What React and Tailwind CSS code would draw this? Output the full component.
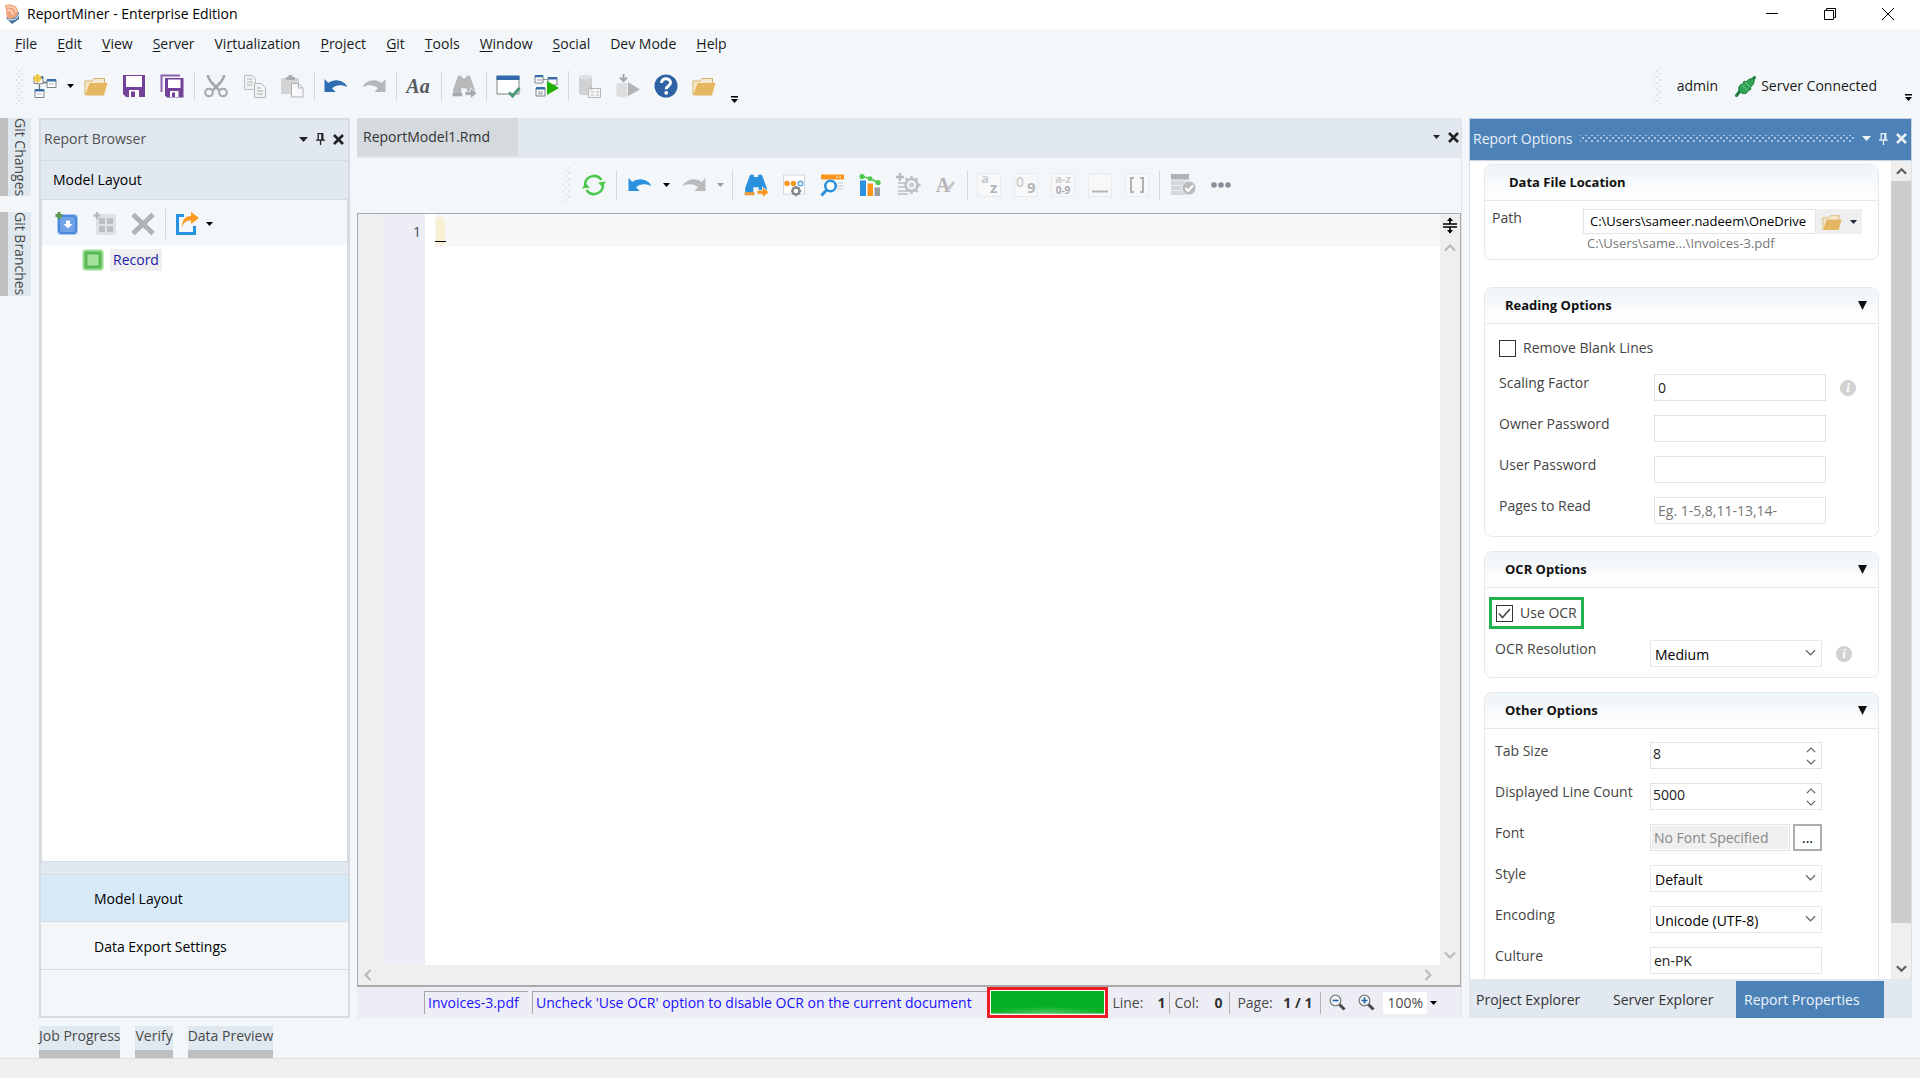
import React, { useState } from 'react';

const menus = [
	['', 'F', 'ile'],
	['', 'E', 'dit'],
	['', 'V', 'iew'],
	['', 'S', 'erver'],
	['Vi', 'r', 'tualization'],
	['', 'P', 'roject'],
	['', 'G', 'it'],
	['', 'T', 'ools'],
	['', 'W', 'indow'],
	['', 'S', 'ocial'],
	['Dev Mode', '', ''],
	['', 'H', 'elp'],
];

function Icon({ size = 24, children, className = '' }) {
	return (
		<svg width={size} height={size} viewBox="0 0 24 24" fill="none" className={`shrink-0 overflow-visible ${className}`} aria-hidden="true">
			{children}
		</svg>
	);
}

function Caret({ className = 'text-black' }) {
	return (
		<svg width="7" height="4" viewBox="0 0 7 4" className={`shrink-0 ${className}`} aria-hidden="true">
			<path d="M0 0h7L3.5 4z" fill="currentColor" />
		</svg>
	);
}

function Overflow() {
	return (
		<svg width="7" height="7" viewBox="0 0 7 7" aria-hidden="true">
			<path d="M0 0h7v1.5H0zM0 3h7L3.5 7z" fill="#000" />
		</svg>
	);
}

function Chevron({ dir = 'down', size = 12, color = '#606060', width = 1.3 }) {
	const paths = {
		down: 'M1 3.5 6 8.5l5-5',
		up: 'M1 8.5 6 3.5l5 5',
		left: 'M8.5 1 3.5 6l5 5',
		right: 'M3.5 1l5 5-5 5',
	};
	return (
		<svg width={size} height={size} viewBox="0 0 12 12" fill="none" className="shrink-0" aria-hidden="true">
			<path d={paths[dir]} stroke={color} strokeWidth={width} />
		</svg>
	);
}

function Pin() {
	return (
		<svg width="9" height="12" viewBox="0 0 9 12" fill="none" aria-hidden="true">
			<path d="M2.2 7V.7h4.6V7M0 7.2h9M4.5 7v5" stroke="currentColor" strokeWidth="1.3" />
			<path d="M5.2 1h1.6v6H5.2z" fill="currentColor" />
		</svg>
	);
}

function Close() {
	return (
		<svg width="11" height="11" viewBox="0 0 11 11" fill="none" aria-hidden="true">
			<path d="m1 1 9 9m0-9-9 9" stroke="currentColor" strokeWidth="2.6" />
		</svg>
	);
}

function Tool({ label, narrow, children }) {
	return (
		<button type="button" aria-label={label} className={`flex h-9 shrink-0 items-center justify-center ${narrow ? 'w-[37px]' : 'w-[38px]'}`}>
			{children}
		</button>
	);
}

function DropButton({ label, className, wide }) {
	return (
		<button type="button" aria-label={label} className={`flex h-9 shrink-0 items-center justify-center ${wide ? 'w-4' : 'w-[13px]'}`}>
			<Caret className={className} />
		</button>
	);
}

function Sep({ wide }) {
	return (
		<div className={`flex shrink-0 justify-center ${wide ? 'w-2' : 'w-[6px]'}`}>
			<div className="h-[30px] w-px bg-[#d3d8dc]" />
		</div>
	);
}

function Grip() {
	return (
		<div className="h-9 w-[7px] shrink-0 bg-[radial-gradient(#e0e5e9_1px,transparent_1px),radial-gradient(#e0e5e9_1px,transparent_1px)] bg-[size:6px_6px] bg-[position:0_0,3px_3px]" />
	);
}

function FolderIcon({ size = 24 }) {
	return (
		<Icon size={size}>
			<path d="M1 21V7h7l2-2.5h10.500V9" fill="#f6ead2" stroke="#d9b062" />
			<path d="M1.200 21.500 5.500 9h18L20 21.500z" fill="#e6b763" />
		</Icon>
	);
}

function UndoIcon({ color, flip }) {
	return (
		<Icon className={flip ? '-scale-x-100' : ''}>
			<path d="M.5 5v13h11.200L8 14.300c4-3.500 9-4.300 15.500-1.300C20.500 6.500 11 3.500 4.300 9z" fill={color} />
		</Icon>
	);
}

function Binoculars({ color, arrow, base }) {
	return (
		<Icon size={26}>
			<path d="M6.500 2.500h3.500v2h4v-2h3.500l1 3 3.500 9.500v5h-7.500v-6h-5v6H2v-5L5.500 5.500z" fill={color} />
			<path d="M1.500 18.500h9v3h-9z" fill={base} />
			<path d="M13 17h5v-3.200l6 4.900-6 4.900V20.500h-5z" fill={arrow} stroke="#f3f7fa" strokeWidth=".7" />
		</Icon>
	);
}

function TextBox({ children }) {
	return (
		<Icon>
			<path d="M.5.5h23v23H.5z" fill="#f7f8f9" stroke="#e9ebed" />
			{children}
		</Icon>
	);
}

function MainToolbar() {
	return (
		<div className="flex h-[54px] items-center pr-2 pl-4">
			<Grip />
			<div className="ml-[3px] flex items-center">
				<Tool label="New">
					<Icon>
						<path d="M1 2.500h9v7H1zM14 5.500h9v8h-9zM2 15.500h9v8H2z" fill="#fff" stroke="#7a828a" />
						<path d="M5 3h5v2H5zM14 5h9v2.500h-9zM2 15h9v2.500H2z" fill="#3a6ea8" />
						<path d="M10 8.500h4M6.500 10v5" stroke="#6b7279" strokeWidth="1.300" />
						<path d="M4 10h5M16 10h5M4 20h5" stroke="#b5bbc0" />
						<circle cx="4.500" cy="4.500" r="3.700" fill="#f4d35c" />
						<path d="M4.500 0v9M0 4.500h9" stroke="#e8bc2a" />
					</Icon>
				</Tool>
				<DropButton label="New options" />
				<Tool label="Open"><FolderIcon /></Tool>
				<Tool label="Save">
					<Icon>
						<path d="M1 1h22v22H4l-3-3z" fill="#754299" />
						<path d="M4 2h16v11H4z" fill="#fff" />
						<path d="M7 16h10v7H7z" fill="#fff" />
						<path d="M9 17.500h4V23H9z" fill="#754299" />
					</Icon>
				</Tool>
				<Tool label="Save all">
					<Icon>
						<path d="M1.500 18V1.500H20" stroke="#8a62ab" strokeWidth="2" />
						<path d="M5 4h18.500v19.500H7l-2-2z" fill="#754299" />
						<path d="M8 5.500h12.500V14H8z" fill="#fff" />
						<path d="M10 17h8.500v6H10z" fill="#fff" />
						<path d="M12 18.500h3V23h-3z" fill="#754299" />
					</Icon>
				</Tool>
				<Sep />
				<Tool label="Cut">
					<Icon>
						<path d="M4 1c0 3 1.500 5 4 8l7 7M20 1c0 3-1.500 5-4 8l-7 7" stroke="#a5a8aa" strokeWidth="2.600" />
						<circle cx="5" cy="18.500" r="3.800" stroke="#a5a8aa" strokeWidth="2" />
						<circle cx="19" cy="18.500" r="3.800" stroke="#a5a8aa" strokeWidth="2" />
					</Icon>
				</Tool>
				<Tool label="Copy">
					<Icon>
						<path d="M2.500 1.500h8l3 3v11h-11z" fill="#f1f2f3" stroke="#bfc2c4" />
						<path d="M5 5h5M5 8h6M5 11h5" stroke="#c4c7c9" strokeWidth="1.300" />
						<path d="M12.500 9.500h7l4 4v10h-11z" fill="#f3f4f5" stroke="#b3b6b9" />
						<path d="M15 14h4M15 17h6M15 20h6" stroke="#bfc2c4" strokeWidth="1.300" />
					</Icon>
				</Tool>
				<Tool label="Paste">
					<Icon>
						<path d="M1 4h18v16H1z" fill="#d2d4d6" />
						<path d="M6 6V3h2.500V1h4v2H15v3z" fill="#a9acaf" />
						<path d="M11.500 9.500h7l4.500 4.500v9h-11.500z" fill="#f7f8f9" stroke="#b0b3b6" />
						<path d="M18.500 9.500V14H23" stroke="#b0b3b6" />
					</Icon>
				</Tool>
				<Sep />
				<Tool label="Undo"><UndoIcon color="#2f6db3" /></Tool>
				<Tool label="Redo"><UndoIcon color="#b4b7b9" flip /></Tool>
				<Sep />
				<Tool label="Font">
					<span className="font-['Liberation_Serif',serif] text-xl leading-6 font-bold text-[#56595b] italic">Aa</span>
				</Tool>
				<Sep wide />
				<Tool label="Find"><Binoculars color="#b6b8ba" arrow="#a6a8aa" base="#a6a8aa" /></Tool>
				<Sep />
				<Tool label="Verify">
					<Icon>
						<path d="M1 2.500h22V20H1z" fill="#fff" stroke="#80868b" />
						<path d="M.5 1.500h23v4.500H.5z" fill="#3368ab" />
						<path d="m13 18.500 3.500 3.500 7-8" stroke="#4b9a77" strokeWidth="3" />
					</Icon>
				</Tool>
				<Tool label="Run">
					<Icon>
						<path d="M1 1.500h8V9H1zM14 3.500h9V11h-9zM2 14h9v8H2z" fill="#fff" stroke="#7a828a" />
						<path d="M1 1h8v2.300H1zM14 3h9v2.500h-9zM2 13h9v2.500H2z" fill="#3a6ea8" />
						<path d="M3 6h5M4 18h5M4 20h5M9 5.500h5" stroke="#8d9499" />
						<path d="m13 7 12 7-12 7z" fill="#1fb200" />
					</Icon>
				</Tool>
				<Sep />
				<Tool label="Deploy job">
					<Icon>
						<path d="M1 3v16c0 3 13 3 13 0V3z" fill="#cfd1d3" />
						<ellipse cx="7.500" cy="3" rx="6.500" ry="2.500" fill="#dfe1e2" />
						<path d="M10.500 14.500h12v9h-12z" fill="#f3f4f5" stroke="#b5b8ba" />
						<path d="M13 18h3M18 18h3M13 21h3M18 21h3M13 12v4" stroke="#b5b8ba" />
					</Icon>
				</Tool>
				<Tool label="Run job">
					<Icon>
						<path d="M.5 9v12c0 3 11 3 11 0V9z" fill="#dcdee0" />
						<path d="M7.500 0v7M4 3.500 7.500 7 11 3.500" stroke="#a3a6a9" strokeWidth="2" />
						<path d="m12 8 12 7.500L12 22z" fill="#b2b4b6" />
					</Icon>
				</Tool>
				<Tool label="Help">
					<Icon>
						<circle cx="12" cy="12" r="11.500" fill="#2f62a2" />
						<path d="M7.500 9c.2-6 9.300-5.500 9 0-.2 3-4.300 3-4.300 6.200" stroke="#fff" strokeWidth="3" />
						<circle cx="12.200" cy="18.800" r="1.900" fill="#fff" />
					</Icon>
				</Tool>
				<Tool label="Browse"><FolderIcon /></Tool>
			</div>
			<button type="button" aria-label="More commands" className="ml-2 self-end pb-[10px]"><Overflow /></button>
			<div className="ml-auto flex items-center">
				<Grip />
				<span className="ml-4">admin</span>
				<svg width="21" height="21" viewBox="0 0 21 21" className="mr-[5px] ml-[17px]" aria-hidden="true">
					<path d="m1.500 19.500 4-5M19.500 1.500l-4 4" stroke="#1f7f3c" strokeWidth="3" strokeLinecap="round" />
					<path d="M4 15c-1-4 1-7 4-7l1-3 2 1c2-3 6-4 8-3 1 3-1 7-4 8l1 2-3 2c-1 3-5 4-9 0z" fill="#2fa457" stroke="#1d7a39" />
					<path d="m7 9 6 6M10 6l5 5" stroke="#74cf8f" />
				</svg>
				<span>Server Connected</span>
			</div>
			<button type="button" aria-label="More status" className="ml-7 self-end pb-3"><Overflow /></button>
		</div>
	);
}

function SideTabs() {
	return (
		<div className="mr-2 flex w-[31px] shrink-0 flex-col gap-4">
			{['Git Changes', 'Git Branches'].map(tab => (
				<button
					key={tab}
					type="button"
					className="border-l-8 border-[#bfbfbf] bg-[#e0e8f0] pr-px pl-[2px] text-left text-[#4a4a4a] [writing-mode:vertical-rl]"
				>
					{tab}
				</button>
			))}
		</div>
	);
}

function PanelButtons() {
	return (
		<div className="flex shrink-0 items-center gap-2">
			<button type="button" aria-label="Panel menu">
				<svg width="9" height="5" viewBox="0 0 9 5" aria-hidden="true"><path d="M0 0h9L4.500 5z" fill="currentColor" /></svg>
			</button>
			<button type="button" aria-label="Pin panel"><Pin /></button>
			<button type="button" aria-label="Close panel"><Close /></button>
		</div>
	);
}

function ReportBrowser() {
	return (
		<section className="flex w-[311px] shrink-0 flex-col border-2 border-[#d5dbe1] bg-[#f3f7fa]">
			<div className="flex h-10 shrink-0 items-center justify-between bg-[#e1e8f0] pr-1 pb-[2px] pl-[3px] text-[#222]">
				<h2 className="text-[#505050]">Report Browser</h2>
				<PanelButtons />
			</div>
			<div className="flex h-10 shrink-0 items-center border-y border-[#d5dbe1] bg-[#e1e8f0] pl-3 text-black">Model Layout</div>
			<div className="flex h-[45px] shrink-0 items-center border-x border-[#d5dbe1] pt-[2px] pl-[6px]">
				<Tool label="Add record">
					<Icon>
						<rect x="2" y="2" width="21" height="21" rx="4" fill="#a9c8f2" />
						<rect x="4" y="4" width="17" height="17" rx="3" fill="#6fa2e6" stroke="#4b87dc" strokeWidth="2" />
						<path d="M11 8.500h4v3.500h2.500l-4.500 4.500L8.500 12H11z" fill="#fff" />
						<path d="M4 0v7M.5 3.500h7" stroke="#5a9a52" strokeWidth="3" />
					</Icon>
				</Tool>
				<Tool label="Add field">
					<Icon>
						<rect x="3" y="2" width="20" height="21" rx="3" fill="#dfe1e3" />
						<path d="M6 6h6v6H6zM14 6h6v6h-6zM6 14h6v6H6zM14 14h6v6h-6z" fill="#bdc0c2" />
						<path d="M4 0v7M.5 3.500h7" stroke="#b9bcbe" strokeWidth="2.500" />
					</Icon>
				</Tool>
				<Tool label="Delete">
					<Icon><path d="m2 2.500 20 19m0-19-20 19" stroke="#b0b2b4" strokeWidth="5" /></Icon>
				</Tool>
				<Sep />
				<Tool label="Export">
					<Icon>
						<path d="M9 3.500H2.500v18h17V14" stroke="#2a93e0" strokeWidth="3" />
						<path d="M7 15C7 8 10 4 16 4V0l8 6-8 6V8.500c-5 0-7 2-9 6.500z" fill="#fb9a1d" />
					</Icon>
				</Tool>
				<button type="button" aria-label="Export options"><Caret /></button>
			</div>
			<div className="min-h-0 flex-1 border border-t-0 border-[#d5dbe1] bg-white pt-1 pl-10">
				<div className="flex items-center gap-[6px]">
					<svg width="22" height="22" viewBox="0 0 22 22" aria-hidden="true">
						<rect x=".5" y=".5" width="21" height="21" rx="3" fill="#96dc90" />
						<rect x="2.500" y="2.500" width="17" height="17" rx="2" fill="#5cb856" />
						<rect x="5.500" y="5.500" width="11" height="11" fill="#a3e39e" />
					</svg>
					<span className="bg-[#efefef] px-[3px] leading-[22px] text-[#1c1ca8]">Record</span>
				</div>
			</div>
			<div className="h-3 shrink-0 bg-[#e1e8f0]" />
			<button type="button" className="h-12 shrink-0 border-y border-[#d5dbe1] bg-[#d8e9f8] pt-[2px] pl-[53px] text-left text-black">Model Layout</button>
			<button type="button" className="h-12 shrink-0 border-b border-[#d5dbe1] pt-[2px] pl-[53px] text-left text-black">Data Export Settings</button>
			<div className="h-[46px] shrink-0" />
		</section>
	);
}

function EditorToolbar() {
	return (
		<div className="flex h-[55px] shrink-0 items-center justify-center bg-[#f3f7fa] pr-4 pb-[2px]">
			<Grip />
			<div className="ml-[5px] flex items-center">
				<Tool label="Refresh">
					<Icon>
						<path d="M3 12a9 9 0 0 1 16.500-5M21 12A9 9 0 0 1 4.500 17" stroke="#4cc94a" strokeWidth="2.500" />
						<path d="M24 8.500 20.500 14 16 9.500zM0 15.500 3.500 10 8 14.500z" fill="#4cc94a" />
					</Icon>
				</Tool>
				<Sep wide />
				<Tool label="Undo edit"><UndoIcon color="#2a91de" /></Tool>
				<DropButton label="Undo list" wide />
				<Tool label="Redo edit"><UndoIcon color="#b9bbbd" flip /></Tool>
				<DropButton label="Redo list" className="text-[#9a9c9e]" wide />
				<Sep wide />
				<Tool label="Find text"><Binoculars color="#2a91de" arrow="#fb961c" base="#e8993a" /></Tool>
				<Tool label="Pattern settings">
					<Icon>
						<path d="M1.500 2h21v19h-21z" fill="#fff" stroke="#d5d7d9" />
						<circle cx="5" cy="10.500" r="2.700" fill="#fb961c" />
						<circle cx="11.500" cy="10.500" r="2.700" fill="#fb961c" />
						<circle cx="18.500" cy="10.500" r="2.300" stroke="#5aa8e4" strokeWidth="1.500" />
						<circle cx="14" cy="18" r="3.500" stroke="#85888a" strokeWidth="2.500" fill="#fff" />
						<path d="M14 13v2M14 21v2.500M9 18h2M17.500 18h2M10.500 14.500 12 16M17.500 14.500 16 16M10.500 21.500 12 20M17.500 21.500 16 20" stroke="#85888a" strokeWidth="1.500" />
					</Icon>
				</Tool>
				<Tool label="Search pattern">
					<Icon>
						<path d="M1 1.500h23v5H1z" fill="#fb961c" />
						<path d="M16 4h2M19 4h2" stroke="#ffd6a0" strokeWidth="1.300" />
						<path d="M17 10h6M17 13h6M17 16h6" stroke="#d9dbdd" strokeWidth="1.500" />
						<circle cx="10.500" cy="13" r="5.200" stroke="#2a91de" strokeWidth="2.600" fill="#fff" />
						<path d="m6.500 17-5 5.500" stroke="#2a91de" strokeWidth="3" />
					</Icon>
				</Tool>
				<Tool label="Statistics">
					<Icon>
						<path d="M2 7.500h6V23H2z" fill="#2a91de" />
						<path d="M9.500 10.500h5.500V23H9.500z" fill="#fb961c" />
						<path d="M16.500 14.500H22V23h-5.500z" fill="#9a9c9e" />
						<path d="m4 3.500 8 2 8 4" stroke="#4cc94a" strokeWidth="1.500" />
						<circle cx="4" cy="3.500" r="2.600" fill="#4cc94a" />
						<circle cx="12" cy="5.700" r="2.400" fill="#4cc94a" />
						<circle cx="20" cy="9.500" r="2.600" fill="#4cc94a" />
					</Icon>
				</Tool>
				<Tool label="Auto settings">
					<Icon>
						<path d="M2 10h10M2 14h10M2 18h10M2 21h10" stroke="#c9cbcd" strokeWidth="2" />
						<path d="M4 0v8M0 4h8" stroke="#b9bbbd" strokeWidth="2.500" />
						<circle cx="15.500" cy="12" r="6" stroke="#bdbfc1" strokeWidth="2.600" fill="#f3f7fa" />
						<circle cx="15.500" cy="12" r="2.500" fill="#c9cbcd" />
						<path d="M15.500 3v3M15.500 18v3M21.500 12h3M20 6.500 21.500 5M20 17.500l1.500 1.500M11 6.500 9.500 5" stroke="#bdbfc1" strokeWidth="2.400" />
					</Icon>
				</Tool>
				<Tool label="Style pen">
					<span className="font-['Liberation_Serif',serif] text-xl leading-6 font-bold text-[#b3b5b7]">A</span>
					<svg width="9" height="14" viewBox="0 0 9 14" className="-ml-1" aria-hidden="true"><path d="m1 13 .5-3.500L7 3l2 2-5.500 7z" fill="#c5c7c9" /></svg>
				</Tool>
				<Sep />
				<Tool label="Match letters" narrow>
					<TextBox>
						<text x="4" y="10" fontSize="13" fontWeight="700" fill="#cacccd">a</text>
						<text x="13" y="20" fontSize="15" fontWeight="700" fill="#b4b6b8">z</text>
					</TextBox>
				</Tool>
				<Tool label="Match digits" narrow>
					<TextBox>
						<text x="2" y="14" fontSize="14" fontWeight="600" fill="#cacccd">0</text>
						<text x="13" y="20" fontSize="15" fontWeight="700" fill="#b4b6b8">9</text>
					</TextBox>
				</Tool>
				<Tool label="Match letters or digits" narrow>
					<TextBox>
						<text x="12" y="10" fontSize="11" textAnchor="middle" fontWeight="700" fill="#cacccd">a-z</text>
						<text x="12" y="21" fontSize="10" textAnchor="middle" fontWeight="700" fill="#a9abad">0-9</text>
					</TextBox>
				</Tool>
				<Tool label="Match blank" narrow>
					<TextBox><path d="M4 18.500h16" stroke="#b4b6b8" strokeWidth="2" /></TextBox>
				</Tool>
				<Tool label="Match brackets" narrow>
					<TextBox><path d="M9 5H6v14h3M15 5h3v14h-3" stroke="#b0b2b4" strokeWidth="2" /></TextBox>
				</Tool>
				<Sep wide />
				<Tool label="Apply">
					<Icon>
						<path d="M0 1h18v5.500H0z" fill="#b0b2b4" />
						<path d="M0 7.500h20v4.500H0zM0 12.800h20v4.500H0zM0 18h20v4H0z" fill="#d5d7d9" />
						<circle cx="18" cy="15" r="7" fill="#b9bbbd" stroke="#f3f7fa" />
						<path d="m14.500 15 2.500 3 5-5.500" stroke="#fff" strokeWidth="2" />
					</Icon>
				</Tool>
				<Tool label="More">
					<svg width="20" height="6" viewBox="0 0 20 6" fill="#8a8f9a" aria-hidden="true">
						<circle cx="3" cy="3" r="2.800" /><circle cx="10" cy="3" r="2.800" /><circle cx="17" cy="3" r="2.800" />
					</svg>
				</Tool>
			</div>
		</div>
	);
}

function ZoomIcon({ plus }) {
	return (
		<svg width="17" height="17" viewBox="0 0 17 17" fill="none" aria-hidden="true">
			<path d="m9.500 9.500 6 6" stroke="#4a4a4a" strokeWidth="3" />
			<circle cx="6.500" cy="6.500" r="5.300" fill="#f6f9fc" stroke="#7c7c7c" strokeWidth="1.300" />
			<path d={plus ? 'M3.500 6.500h6M6.500 3.500v6' : 'M3.500 6.500h6'} stroke="#1f62a8" strokeWidth="1.700" />
		</svg>
	);
}

function StatusBar() {
	return (
		<div className="flex h-[31px] shrink-0 items-stretch bg-[#edeef5] pl-[67px] text-[#4a4a4a]">
			<a href="#file" className="my-1 w-[104px] shrink-0 border-t border-l border-[#a5a5a5] pl-[3px] leading-[22px] whitespace-nowrap text-[#1a10ff]">Invoices-3.pdf</a>
			<a href="#ocr" className="my-1 ml-1 min-w-0 flex-1 overflow-hidden border-t border-l border-[#a5a5a5] pl-[3px] leading-[22px] whitespace-nowrap text-[#1a10ff]">
				Uncheck &#39;Use OCR&#39; option to disable OCR on the current document
			</a>
			<div className="w-[121px] shrink-0 border-[3px] border-[#ee1c24] bg-white p-px">
				<div role="progressbar" aria-label="OCR progress" className="h-full border-b border-[#7fc98b] bg-[#06b025] bg-[radial-gradient(ellipse_at_bottom,#4cc95f_0%,#06b025_75%)] bg-[size:100%_6px] bg-bottom bg-no-repeat" />
			</div>
			<div className="flex shrink-0 items-center">
				<span className="ml-1 flex w-[53px] justify-between">Line: <b className="text-[#333]">1</b></span>
				<span className="mx-1 h-[22px] w-px bg-[#b5b5b5]" />
				<span className="flex w-12 justify-between">Col: <b className="text-[#333]">0</b></span>
				<span className="mx-[7px] h-[22px] w-px bg-[#b5b5b5]" />
				<span className="flex w-[75px] justify-between">Page: <b className="text-[#333]">1 / 1</b></span>
				<span className="mx-2 h-[22px] w-px bg-[#b5b5b5]" />
				<button type="button" aria-label="Zoom out"><ZoomIcon /></button>
				<button type="button" aria-label="Zoom in" className="ml-3"><ZoomIcon plus /></button>
				<button type="button" className="ml-2 flex items-center gap-[3px]">
					<span className="bg-white px-1 leading-[22px]">100%</span>
					<Caret />
				</button>
			</div>
			<div className="w-6 shrink-0" />
		</div>
	);
}

function Editor() {
	return (
		<section className="mr-[7px] ml-[7px] flex min-w-0 flex-1 flex-col border-r border-[#dfe3e8] bg-[#e1e8f0]">
			<div className="flex h-10 shrink-0 items-start justify-between">
				<button type="button" className="h-[38px] w-[161px] bg-[#d5dade] pl-[6px] text-left text-[#333]">ReportModel1.Rmd</button>
				<div className="flex h-[38px] items-center gap-2 pr-[2px] text-[#222]">
					<button type="button" aria-label="Document list"><Caret className="text-[#222]" /></button>
					<button type="button" aria-label="Close document"><Close /></button>
				</div>
			</div>
			<EditorToolbar />
			<div className="flex min-h-0 flex-1 flex-col border border-b-2 border-[#ababab] bg-[#efefef]">
				<div className="flex min-h-0 flex-1">
					<div className="w-6 shrink-0" />
					<div className="w-[43px] shrink-0 bg-[#edeef5] pt-[6px] pr-1 text-right leading-6 text-[#3f5064]">1</div>
					<div className="min-w-0 flex-1 bg-white pl-[10px]">
						<div className="h-[33px] bg-[#f7f7f7] pt-[3px]">
							<div className="ml-px h-6 w-[9px] rounded-t-lg bg-[#faf0d2]" />
							<div className="h-px w-[11px] bg-black" />
							<div className="ml-px h-[3px] w-[9px] rounded-b-lg bg-[#faf0d2]" />
						</div>
					</div>
					<div className="flex w-5 shrink-0 flex-col items-center pt-[3px] pb-1">
						<svg width="14" height="17" viewBox="0 0 14 17" fill="none" aria-hidden="true">
							<path d="M0 7h14M0 10h14M7 1v6M7 10v6" stroke="#000" strokeWidth="1.600" />
							<path d="m4 4 3-3.500L10 4zM4 13l3 3.500 3-3.500z" fill="#000" />
						</svg>
						<div className="mt-2"><Chevron dir="up" color="#b9b9b9" width={2} /></div>
						<div className="mt-auto"><Chevron color="#b9b9b9" width={2} /></div>
					</div>
				</div>
				<div className="flex h-5 shrink-0 items-center justify-between pr-[26px] pl-1">
					<Chevron dir="left" color="#b9b9b9" width={2} />
					<Chevron dir="right" color="#b9b9b9" width={2} />
				</div>
			</div>
			<StatusBar />
		</section>
	);
}

function Card({ title, collapsible = true, last, children }) {
	return (
		<section className={`border border-[#e6e9ec] bg-white ${last ? 'rounded-t-lg border-b-0' : 'rounded-lg'}`}>
			<div className="flex h-9 items-center justify-between rounded-t-lg border-b border-[#e6e9ec] bg-linear-to-b from-[#eff4f8] to-white pr-[11px] pl-5 font-bold text-[#111]">
				<h3 className={`text-[13px] ${collapsible ? '' : 'pl-1'}`}>{title}</h3>
				{collapsible && (
					<button type="button" aria-label={`Collapse ${title}`}>
						<svg width="9" height="9" viewBox="0 0 9 9" aria-hidden="true"><path d="M0 0h9L4.500 9z" fill="#111" /></svg>
					</button>
				)}
			</div>
			{children}
		</section>
	);
}

function Row({ id, label, info, children }) {
	return (
		<div className="flex h-[27px] items-center">
			<label htmlFor={id} className="w-[155px] shrink-0 self-start leading-[18px]">{label}</label>
			<div className="flex h-[27px] w-[172px] shrink-0">{children}</div>
			{info && (
				<span className="ml-[14px] flex size-4 items-center justify-center rounded-full bg-[#d2d2d2] font-['Liberation_Serif',serif] text-[13px] leading-4 font-bold text-white italic">i</span>
			)}
		</div>
	);
}

function TextInput({ id, ...rest }) {
	return (
		<input id={id} type="text" className="h-full w-full min-w-0 border border-[#e3e3e3] bg-white px-[3px] text-[#222] placeholder:text-[#777]" {...rest} />
	);
}

function Spinner({ id, value }) {
	const [count, setCount] = useState(value);
	return (
		<div className="flex w-full border border-[#e3e3e3]">
			<input id={id} type="text" inputMode="numeric" value={count} onChange={e => setCount(Number(e.target.value) || 0)} className="w-full min-w-0 px-[2px] pb-1 text-[#222]" />
			<div className="flex shrink-0 flex-col justify-center gap-[2px] pr-[5px]">
				<button type="button" aria-label="Increase" onClick={() => setCount(count + 1)}><Chevron dir="up" size={10} color="#555" /></button>
				<button type="button" aria-label="Decrease" onClick={() => setCount(count - 1)}><Chevron size={10} color="#555" /></button>
			</div>
		</div>
	);
}

function Dropdown({ id, options }) {
	return (
		<div className="grid w-full items-center">
			<select id={id} className="col-start-1 row-start-1 h-full w-full appearance-none border border-[#e8e8e8] bg-white px-1 pt-[2px] text-black">
				{options.map(option => <option key={option}>{option}</option>)}
			</select>
			<div className="pointer-events-none col-start-1 row-start-1 justify-self-end pr-[6px] pb-[2px]"><Chevron size={11} color="#666" /></div>
		</div>
	);
}

function CheckBox({ label, defaultChecked }) {
	return (
		<label className="flex items-center gap-[7px]">
			<span className="grid size-[17px] place-items-center">
				<input type="checkbox" defaultChecked={defaultChecked} className="peer col-start-1 row-start-1 size-[17px] appearance-none border border-[#333] bg-white" />
				<svg width="13" height="11" viewBox="0 0 13 11" fill="none" className="pointer-events-none invisible col-start-1 row-start-1 peer-checked:visible" aria-hidden="true">
					<path d="m1 5.500 3.500 4L12 1" stroke="#444" strokeWidth="1.500" />
				</svg>
			</span>
			{label}
		</label>
	);
}

function ReportOptions() {
	return (
		<section className="mr-2 flex w-[443px] shrink-0 flex-col">
			<div className="flex h-[43px] shrink-0 items-center border border-[#c5d3e0] bg-[#4d82b8] pr-1 pb-[2px] pl-[3px] text-[#e8f0f8]">
				<h2>Report Options</h2>
				<div className="mx-[7px] h-[7px] flex-1 bg-[radial-gradient(#a9c4de_1px,transparent_1px),radial-gradient(#a9c4de_1px,transparent_1px)] bg-[size:6px_6px] bg-[position:0_0,3px_3px]" />
				<PanelButtons />
			</div>
			<div className="flex min-h-0 flex-1 border-x border-[#dbe1e7] bg-white">
				<div className="flex min-w-0 flex-1 flex-col overflow-hidden pt-[3px] pr-3 pl-[14px] text-sm text-[#444]">
					<Card title="Data File Location" collapsible={false}>
						<div className="flex h-[58px] pt-2 pl-[7px]">
							<label htmlFor="path" className="w-[91px] shrink-0 leading-[18px]">Path</label>
							<div className="min-w-0 flex-1 pr-4">
								<div className="flex h-[25px] bg-[#efefef]">
									<div className="flex min-w-0 flex-1 border border-[#e3e3e3] bg-white px-[6px]">
										<input id="path" type="text" defaultValue="C:\Users\sameer.nadeem\OneDrive" className="w-full min-w-0 text-[13px] text-black" />
									</div>
									<button type="button" aria-label="Browse for file" className="flex w-[46px] items-center justify-center gap-2">
										<FolderIcon size={20} />
										<Caret className="text-[#1c2a3c]" />
									</button>
								</div>
								<div className="pl-1 text-[13px] leading-[18px] text-[#777]">C:\Users\same...\Invoices-3.pdf</div>
							</div>
						</div>
					</Card>
					<div className="mt-[27px]">
						<Card title="Reading Options">
							<div className="flex flex-col gap-[14px] px-[14px] pt-[14px] pb-3">
								<CheckBox label="Remove Blank Lines" />
								<div className="flex flex-col gap-[14px] pt-[2px]">
									<Row id="scaling" label="Scaling Factor" info><TextInput id="scaling" defaultValue="0" /></Row>
									<Row id="owner" label="Owner Password"><TextInput id="owner" /></Row>
									<Row id="user" label="User Password"><TextInput id="user" /></Row>
									<Row id="pages" label="Pages to Read"><TextInput id="pages" placeholder="Eg. 1-5,8,11-13,14-" /></Row>
								</div>
							</div>
						</Card>
					</div>
					<div className="mt-[14px]">
						<Card title="OCR Options">
							<div className="px-[10px] pt-[9px] pb-[10px]">
								<div className="-ml-[6px] flex">
									<div className="border-[3px] border-[#22b14c] px-1 py-[3px]">
										<CheckBox label="Use OCR" defaultChecked />
									</div>
								</div>
								<div className="pt-[11px]">
									<Row id="resolution" label="OCR Resolution" info><Dropdown id="resolution" options={['Medium', 'Low', 'High']} /></Row>
								</div>
							</div>
						</Card>
					</div>
					<div className="mt-[14px]">
						<Card title="Other Options" last>
							<div className="flex flex-col gap-[14px] px-[10px] pt-[13px]">
								<Row id="tab" label="Tab Size"><Spinner id="tab" value={8} /></Row>
								<Row id="lines" label="Displayed Line Count"><Spinner id="lines" value={5000} /></Row>
								<Row id="font" label="Font">
									<div className="flex w-full gap-[3px]">
										<div className="min-w-0 flex-1 border border-[#e3e3e3] p-px">
											<input id="font" type="text" readOnly value="No Font Specified" className="h-full w-full min-w-0 bg-[#efefef] px-[2px] text-[#888]" />
										</div>
										<button type="button" aria-label="Choose font" className="w-[29px] border-2 border-[#adadad] bg-white text-black">...</button>
									</div>
								</Row>
								<Row id="style" label="Style"><Dropdown id="style" options={['Default', 'Bold']} /></Row>
								<Row id="encoding" label="Encoding"><Dropdown id="encoding" options={['Unicode (UTF-8)', 'ASCII']} /></Row>
								<Row id="culture" label="Culture"><TextInput id="culture" defaultValue="en-PK" /></Row>
								<div className="h-10" />
							</div>
						</Card>
					</div>
				</div>
				<div className="flex w-5 shrink-0 flex-col items-center bg-[#efefef]">
					<div className="flex h-5 items-center"><Chevron dir="up" size={11} width={2.4} /></div>
					<div className="w-full flex-1 bg-[#cdcdcd]" />
					<div className="flex h-14 items-end pb-[5px]"><Chevron size={11} width={2.4} /></div>
				</div>
			</div>
			<div className="flex h-[39px] shrink-0 bg-[#e1e8f0] pt-[2px] pl-[7px] text-[#333]">
				<button type="button" className="w-[137px] text-left">Project Explorer</button>
				<button type="button" className="w-[123px] text-left">Server Explorer</button>
				<button type="button" className="w-[148px] bg-[#4d82b8] pl-2 text-left text-[#f0f5fa]">Report Properties</button>
			</div>
		</section>
	);
}

function App() {
	return (
		<div className="flex h-screen flex-col overflow-hidden bg-[#f3f7fa] font-['Open_Sans','Noto_Sans',sans-serif] text-sm text-[#1a1a1a]">
			<header className="flex h-[29px] shrink-0 items-center bg-white pb-px pl-1 text-black">
				<svg width="17" height="20" viewBox="0 0 17 20" aria-hidden="true">
					<path d="M2 14 8 20l7-5V8z" fill="#3e6c9c" />
					<path d="M4 15c5 2 9 0 11-5" stroke="#b9cde0" strokeWidth="1.500" fill="none" />
					<path d="M1 1c7-2 13 1 13 7 0 5-5 8-11 6z" fill="#f0a27c" />
					<path d="M3 3c5-1 9 1 9 5M3 6c3 0 6 1 6 5" stroke="#fbd9c6" strokeWidth="1.500" fill="none" />
				</svg>
				<h1 className="ml-[6px]">ReportMiner - Enterprise Edition</h1>
				<div className="ml-auto flex items-center gap-[46px] pr-[26px]">
					<button type="button" aria-label="Minimize"><svg width="12" height="12" viewBox="0 0 12 12"><path d="M0 5.500h12" stroke="#000" /></svg></button>
					<button type="button" aria-label="Restore"><svg width="12" height="12" viewBox="0 0 12 12" fill="none"><path d="M.5 2.500h9v9h-9zM2.500 2.500v-2h9v9h-2" stroke="#000" /></svg></button>
					<button type="button" aria-label="Close"><svg width="12" height="12" viewBox="0 0 12 12"><path d="m0 0 12 12M12 0 0 12" stroke="#000" /></svg></button>
				</div>
			</header>
			<nav className="flex h-[30px] shrink-0 items-center gap-5 pl-[15px]">
				{menus.map(([before, key, after]) => (
					<button key={before + key + after} type="button">
						{before}
						<span className="underline underline-offset-2">{key}</span>
						{after}
					</button>
				))}
			</nav>
			<MainToolbar />
			<main className="mt-[5px] flex min-h-0 flex-1">
				<SideTabs />
				<ReportBrowser />
				<Editor />
				<ReportOptions />
			</main>
			<div className="flex h-10 shrink-0 items-end gap-[15px] pl-[39px]">
				{['Job Progress', 'Verify', 'Data Preview'].map(tab => (
					<button key={tab} type="button" className="h-8 border-b-8 border-[#bfbfbf] bg-[#e0e8f0] pb-1 leading-5 text-[#4a4a4a]">{tab}</button>
				))}
			</div>
			<footer className="h-5 shrink-0 border-t border-[#dcdfe2] bg-[#efefef]" />
		</div>
	);
}

export default App;
